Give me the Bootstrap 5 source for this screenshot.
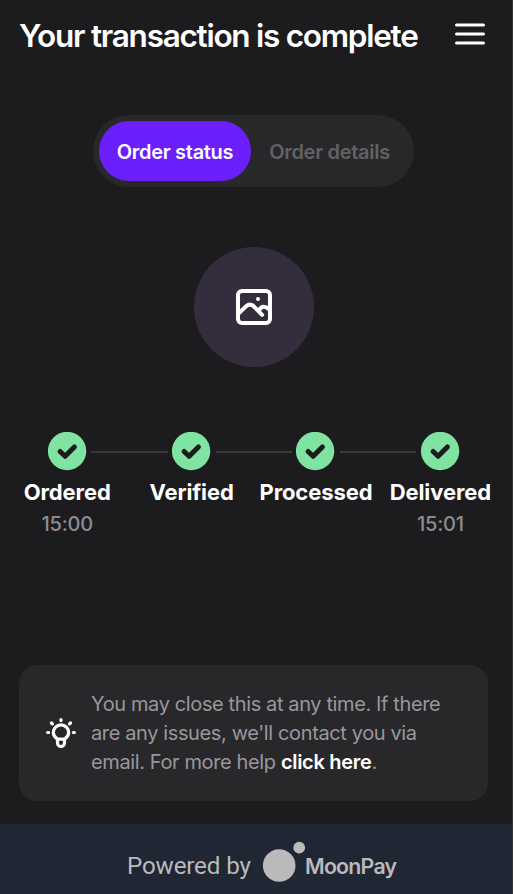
<!DOCTYPE html>
<html lang="en">
<head>
<meta charset="utf-8">
<meta name="viewport" content="width=device-width, initial-scale=1">
<title>Your transaction is complete</title>
<link href="https://cdn.jsdelivr.net/npm/bootstrap@5.3.0/dist/css/bootstrap.min.css" rel="stylesheet">
<style>
body{font-family:Inter,"Liberation Sans",sans-serif;background:#1c1c1e;color:#fff}
.screen{width:513px;height:894px;overflow:hidden;border-right:1px solid #353537}
.topbar{height:115px;padding:16px 27px 0 19px}
.title{font-size:31.5px;line-height:40px;font-weight:600;letter-spacing:-1.26px;white-space:nowrap}
.menu-btn{margin-top:7px;line-height:0}
.switch{width:321px;height:72px;margin-left:93px;padding:6px;background:#28282a;border-radius:36px}
.switch .btn{height:60px;border:0;border-radius:30px;font-size:20px;font-weight:600;letter-spacing:-.3px;padding:2px 0 0;white-space:nowrap}
.switch .on{width:152px;background:#6a1ffb;color:#fff}
.switch .off{width:157px;color:#626266}
.preview{width:120px;height:120px;margin:60px 0 0 194px;background:#342d3e}
.steps{margin:64px 0 0 5px;width:498px}
.step{width:124.4px}
.track{height:40px}
.rail{height:2px;margin-top:1px;background:#39393b}
.tick{margin:0 4.5px}
.step-name{font-size:22px;line-height:28px;font-weight:700;letter-spacing:-.1px;margin-top:7px;white-space:nowrap}
.step-time{font-size:20px;line-height:28px;font-weight:500;letter-spacing:-.2px;color:#8d8c93;margin-top:4px;height:28px}
.notice{width:469px;height:136px;margin:127px 0 0 19px;padding:0 0 0 27px;background:#28282a;border-radius:18px}
.notice p{font-size:20px;line-height:29px;letter-spacing:-.38px;color:#98979e;margin-left:15px;white-space:nowrap}
.notice a{letter-spacing:-.3px}
.brandbar{height:70px;margin-top:23px;padding-left:127px;background:#202634;color:#bababa}
.powered{font-family:Roboto,sans-serif;font-size:24.2px;line-height:30px;letter-spacing:-.15px;margin-top:27px;width:135px;white-space:nowrap}
.moon{margin-top:17px}
.moon-name{font-size:21.3px;line-height:28px;font-weight:600;letter-spacing:-.75px;margin-top:28px}
</style>
<script src="https://cdn.jsdelivr.net/npm/bootstrap@5.3.0/dist/js/bootstrap.bundle.min.js"></script>
</head>
<body>
<svg class="d-none"><symbol id="tick" viewBox="0 0 39 39"><circle cx="19.1" cy="19" r="19.2" fill="#7fe3a1"/><path d="M12.100 19.500l5 4.800 9.300-9.300" fill="none" stroke="#1c1c1e" stroke-width="5" stroke-linecap="round" stroke-linejoin="round"/></symbol></svg>
<main class="screen d-flex flex-column">
  <header class="topbar d-flex justify-content-between align-items-start">
    <h1 class="title mb-0">Your transaction is complete</h1>
    <button class="menu-btn btn p-0 border-0" aria-label="Menu"><svg width="30" height="22" fill="none" stroke="#fff" stroke-width="3" stroke-linecap="round"><path d="M1.5 2h27M1.5 11h27M1.5 20h27"/></svg></button>
  </header>
  <div class="switch d-flex flex-shrink-0">
    <button class="btn on">Order status</button><button class="btn off">Order details</button>
  </div>
  <div class="preview rounded-circle d-flex align-items-center justify-content-center flex-shrink-0">
    <svg width="36" height="36" fill="none" stroke="#fff" stroke-width="4" stroke-linecap="round" stroke-linejoin="round"><rect x="2" y="2" width="32" height="32" rx="4"/><path d="M2.500 24.500l7.700-7.400q3.700-3 7.300 0l8.600 8.800M22.500 22.200c2.500-5.400 6.200-6 10.800-1.700"/><circle cx="22" cy="10" r="2" fill="#fff" stroke="none"/></svg>
  </div>
  <section class="steps d-flex flex-shrink-0 text-center">
    <div class="step d-flex flex-column align-items-center flex-shrink-0"><div class="track d-flex align-items-center w-100"><i class="rail flex-fill invisible"></i><svg class="tick overflow-visible" width="39" height="39"><use href="#tick"/></svg><i class="rail flex-fill"></i></div><div class="step-name">Ordered</div><div class="step-time">15:00</div></div>
    <div class="step d-flex flex-column align-items-center flex-shrink-0"><div class="track d-flex align-items-center w-100"><i class="rail flex-fill"></i><svg class="tick overflow-visible" width="39" height="39"><use href="#tick"/></svg><i class="rail flex-fill"></i></div><div class="step-name">Verified</div><div class="step-time"></div></div>
    <div class="step d-flex flex-column align-items-center flex-shrink-0"><div class="track d-flex align-items-center w-100"><i class="rail flex-fill"></i><svg class="tick overflow-visible" width="39" height="39"><use href="#tick"/></svg><i class="rail flex-fill"></i></div><div class="step-name">Processed</div><div class="step-time"></div></div>
    <div class="step d-flex flex-column align-items-center flex-shrink-0"><div class="track d-flex align-items-center w-100"><i class="rail flex-fill"></i><svg class="tick overflow-visible" width="39" height="39"><use href="#tick"/></svg><i class="rail flex-fill invisible"></i></div><div class="step-name">Delivered</div><div class="step-time">15:01</div></div>
  </section>
  <section class="notice d-flex align-items-center flex-shrink-0">
    <svg class="flex-shrink-0" width="30" height="30" fill="none" stroke="#fff" stroke-width="3.2" stroke-linecap="round" stroke-linejoin="round"><path d="M11.500 21.200C9.200 19.500 7.300 17.700 7.300 14.500a7.700 7.700 0 0 1 15.400 0c0 3.200-1.900 5-4.200 6.700zM11.500 21.500v3.500a3.500 3.500 0 0 0 7 0v-3.500M15 1.600v1M5.500 5l.9.9M24.500 5l-.9.9M1.600 14.500h1M27.400 14.500h1"/></svg>
    <p class="mb-0">You may close this at any time. If there<br>are any issues, we'll contact you via<br>email. For more help <a href="#" class="text-white text-decoration-none fw-semibold">click here</a>.</p>
  </section>
  <footer class="brandbar d-flex align-items-start flex-shrink-0">
    <span class="powered">Powered by</span>
    <svg class="moon" width="43" height="42" fill="#bababa"><circle cx="17.200" cy="24.500" r="16.300"/><circle cx="37.200" cy="6.700" r="5.900"/></svg>
    <span class="moon-name">MoonPay</span>
  </footer>
</main>
</body>
</html>
